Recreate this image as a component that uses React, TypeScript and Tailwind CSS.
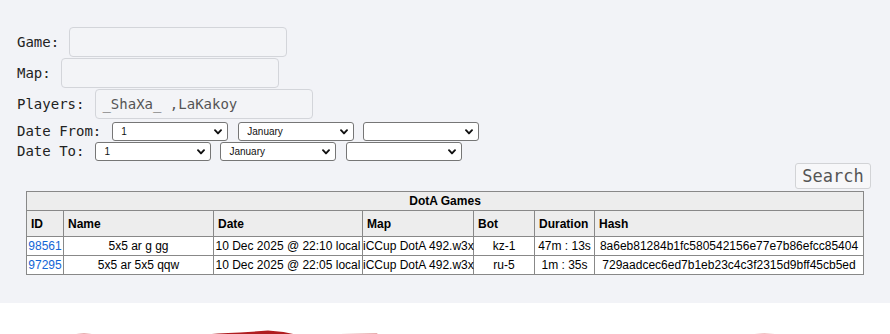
import React from "react";

const mono = { fontFamily: "'DejaVu Sans Mono', monospace" };
const sans = { fontFamily: "'Liberation Sans', Arial, sans-serif" };

function Chevron() {
  return (
    <svg
      className="pointer-events-none absolute right-[6px] top-1/2 -translate-y-1/2"
      width="8"
      height="6"
      viewBox="0 0 8 6"
    >
      <path d="M1 1.2 L4 4.4 L7 1.2" fill="none" stroke="#111" strokeWidth="1.9" strokeLinecap="round" strokeLinejoin="round" />
    </svg>
  );
}

function Sel({ value, className = "" }: { value: string; className?: string }) {
  return (
    <div className={"relative " + className}>
      <select
        defaultValue={value}
        className="block h-[19px] w-[116px] appearance-none rounded-[3px] border border-[#767676] bg-white pl-[8px] pr-[16px] text-[10px] leading-[17px] text-[#111]"
        style={sans}
      >
        <option value={value}>{value}</option>
      </select>
      <Chevron />
    </div>
  );
}

const headers = ["ID", "Name", "Date", "Map", "Bot", "Duration", "Hash"];
const rows = [
  ["98561", "5x5 ar g gg", "10 Dec 2025 @ 22:10 local", "iCCup DotA 492.w3x", "kz-1", "47m : 13s", "8a6eb81284b1fc580542156e77e7b86efcc85404"],
  ["97295", "5x5 ar 5x5 qqw", "10 Dec 2025 @ 22:05 local", "iCCup DotA 492.w3x", "ru-5", "1m : 35s", "729aadcec6ed7b1eb23c4c3f2315d9bff45cb5ed"],
];
const widths = ["w-[37px]", "w-[150px]", "w-[149px]", "w-[111px]", "w-[61px]", "w-[60px]", "w-[269px]"];

export default function App() {
  return (
    <div className="w-[890px] bg-white">
      <div className="bg-[#f2f3f7] pb-[28px] pt-[27px]">
        <div className="pl-[17px] text-[14px] text-[#222]" style={mono}>
          <div className="flex h-[30px] items-center">
            <span>Game:</span>
            <input className="ml-[10px] h-[30px] w-[218px] rounded-[4px] border border-[#d3d5da] bg-[#f3f4f7]" />
          </div>
          <div className="mt-[1px] flex h-[30px] items-center">
            <span>Map:</span>
            <input className="ml-[10px] h-[30px] w-[218px] rounded-[4px] border border-[#d3d5da] bg-[#f3f4f7]" />
          </div>
          <div className="mt-[1px] flex h-[30px] items-center">
            <span>Players:</span>
            <div className="ml-[11px] flex h-[30px] w-[218px] items-center whitespace-pre rounded-[4px] border border-[#d3d5da] bg-[#f3f4f7] pl-[6px] text-[14px] leading-[20px] text-[#555]">
              _ShaXa_ ,LaKakoy
            </div>
          </div>
          <div className="mt-[3px] flex h-[19px] items-center">
            <span>Date From:</span>
            <Sel value="1" className="ml-[11px]" />
            <Sel value="January" className="ml-[10px]" />
            <Sel value="" className="ml-[9px]" />
          </div>
          <div className="mt-[1px] flex h-[19px] items-center">
            <span>Date To:</span>
            <Sel value="1" className="ml-[11px]" />
            <Sel value="January" className="ml-[9px]" />
            <Sel value="" className="ml-[10px]" />
          </div>
        </div>
        <div className="mt-[2px] flex justify-end pr-[19px]">
          <button
            className="h-[26px] w-[76px] rounded-[3px] border border-[#d2d3d6] bg-[#f7f7f9] text-[17px] leading-[24px] text-[#555]"
            style={mono}
          >
            Search
          </button>
        </div>
        <table
          className="ml-[26px] mt-[2px] w-[837px] table-fixed border-collapse text-[12px] text-black"
          style={sans}
        >
          <colgroup>
            {widths.map((w, i) => (
              <col key={i} className={w} />
            ))}
          </colgroup>
          <thead>
            <tr>
              <th colSpan={7} className="h-[19px] border border-[#888] bg-[#ededed] p-0 text-center font-bold leading-[14px]">
                DotA Games
              </th>
            </tr>
            <tr>
              {headers.map((h) => (
                <th key={h} className="h-[26px] border border-[#888] bg-[#ededed] px-[4px] py-0 text-left font-bold">
                  {h}
                </th>
              ))}
            </tr>
          </thead>
          <tbody>
            {rows.map((r) => (
              <tr key={r[0]}>
                {r.map((c, i) => (
                  <td
                    key={i}
                    className={
                      "h-[19px] whitespace-nowrap border border-[#888] bg-white p-0 text-center leading-[14px] " +
                      (i === 0 ? "text-[#1366d6]" : "")
                    }
                  >
                    {c}
                  </td>
                ))}
              </tr>
            ))}
          </tbody>
        </table>
      </div>
      <div className="h-[32px] bg-white">
        <svg width="890" height="32" viewBox="0 0 890 32" className="block">
          <ellipse cx="84" cy="32.5" rx="11" ry="2" fill="#c0393b" opacity="0.8" />
          <path d="M201 32 Q215 30.6 240 29.6 L268 27.6 Q284 28.6 298 32 Z" fill="#b01d20" />
          <path d="M318 32 Q322 31 340 30.9 L377 30.6 L379 32 Z" fill="#c43a3c" opacity="0.85" />
          <ellipse cx="521" cy="32.6" rx="7" ry="1.6" fill="#e8a8a8" opacity="0.7" />
          <path d="M745 32 Q755 30.8 764 30.6 Q775 30.9 784 32 Z" fill="#d9686a" opacity="0.8" />
        </svg>
      </div>
    </div>
  );
}
